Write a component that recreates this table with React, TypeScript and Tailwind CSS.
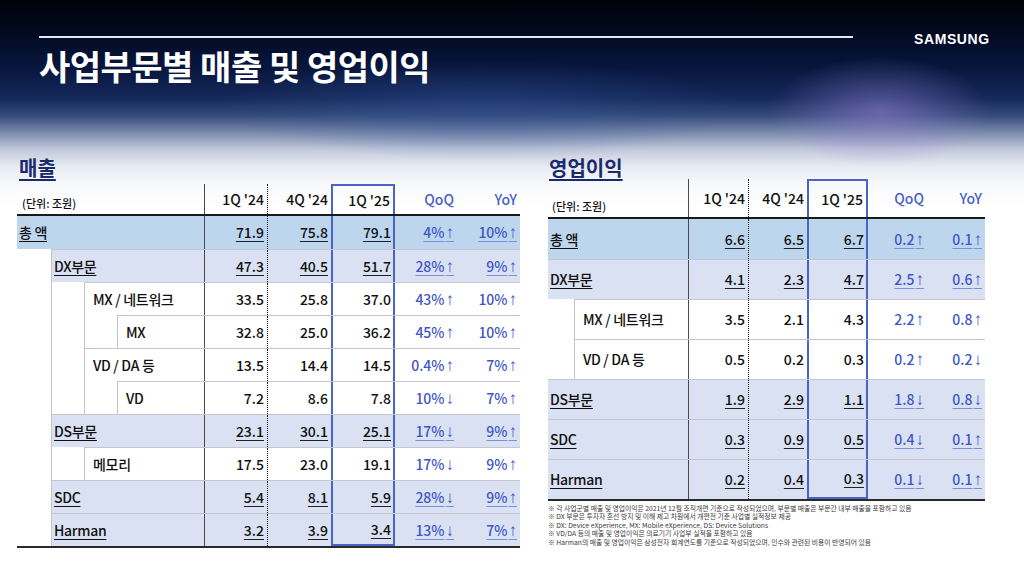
import React from "react";

type Kind = "total" | "seg" | "sub";
type Row = {
  label: string;
  level: number;
  kind: Kind;
  v: [string, string, string];
  q: string;
  y: string;
};

const leftRows: Row[] = [
  { label: "총 액", level: 0, kind: "total", v: ["71.9", "75.8", "79.1"], q: "4%↑", y: "10%↑" },
  { label: "DX부문", level: 1, kind: "seg", v: ["47.3", "40.5", "51.7"], q: "28%↑", y: "9%↑" },
  { label: "MX / 네트워크", level: 2, kind: "sub", v: ["33.5", "25.8", "37.0"], q: "43%↑", y: "10%↑" },
  { label: "MX", level: 3, kind: "sub", v: ["32.8", "25.0", "36.2"], q: "45%↑", y: "10%↑" },
  { label: "VD / DA 등", level: 2, kind: "sub", v: ["13.5", "14.4", "14.5"], q: "0.4%↑", y: "7%↑" },
  { label: "VD", level: 3, kind: "sub", v: ["7.2", "8.6", "7.8"], q: "10%↓", y: "7%↑" },
  { label: "DS부문", level: 1, kind: "seg", v: ["23.1", "30.1", "25.1"], q: "17%↓", y: "9%↑" },
  { label: "메모리", level: 2, kind: "sub", v: ["17.5", "23.0", "19.1"], q: "17%↓", y: "9%↑" },
  { label: "SDC", level: 1, kind: "seg", v: ["5.4", "8.1", "5.9"], q: "28%↓", y: "9%↑" },
  { label: "Harman", level: 1, kind: "seg", v: ["3.2", "3.9", "3.4"], q: "13%↓", y: "7%↑" },
];

const rightRows: Row[] = [
  { label: "총 액", level: 0, kind: "total", v: ["6.6", "6.5", "6.7"], q: "0.2↑", y: "0.1↑" },
  { label: "DX부문", level: 0, kind: "seg", v: ["4.1", "2.3", "4.7"], q: "2.5↑", y: "0.6↑" },
  { label: "MX / 네트워크", level: 1, kind: "sub", v: ["3.5", "2.1", "4.3"], q: "2.2↑", y: "0.8↑" },
  { label: "VD / DA 등", level: 1, kind: "sub", v: ["0.5", "0.2", "0.3"], q: "0.2↑", y: "0.2↓" },
  { label: "DS부문", level: 0, kind: "seg", v: ["1.9", "2.9", "1.1"], q: "1.8↓", y: "0.8↓" },
  { label: "SDC", level: 0, kind: "seg", v: ["0.3", "0.9", "0.5"], q: "0.4↓", y: "0.1↑" },
  { label: "Harman", level: 0, kind: "seg", v: ["0.2", "0.4", "0.3"], q: "0.1↓", y: "0.1↑" },
];

type Cfg = {
  spacers: string[];
  cols: string[];
  rowH: string;
  headerH: string;
  leftLine: boolean;
};

const leftCfg: Cfg = {
  spacers: ["w-[34px]", "w-[33px] border-l border-[#c4c4c4]", "w-[33px] border-l border-[#c4c4c4]"],
  cols: ["w-[63px]", "w-[64px]", "w-[64px]", "w-[62px]", "w-[63px]"],
  rowH: "h-[33px]",
  headerH: "h-[32px]",
  leftLine: true,
};

const rightCfg: Cfg = {
  spacers: ["w-[26px]"],
  cols: ["w-[60px]", "w-[59px]", "w-[61px]", "w-[59px]", "w-[58px]"],
  rowH: "h-[40px]",
  headerH: "h-[40px]",
  leftLine: false,
};

const colBorder = [
  "border-l border-[#4a4a4a]",
  "border-l border-dotted border-[#111]",
  "border-x-2 border-[#4a63c7]",
  "",
  "",
];

function Val({ text, blue, under }: { text: string; blue?: boolean; under: boolean }) {
  const last = text.slice(-1);
  const hasArrow = last === "↑" || last === "↓";
  const num = hasArrow ? text.slice(0, -1) : text;
  return (
    <span
      className={
        (blue ? "text-[#3f56c4] decoration-[#7d8fd8] " : "text-[#111] decoration-[#222] ") +
        (under ? "underline underline-offset-[3px] decoration-[1px]" : "")
      }
    >
      {num}
      {hasArrow && (
        <span className="font-['Liberation_Sans',sans-serif] font-bold text-[17px] leading-none ml-[1px]">{last}</span>
      )}
    </span>
  );
}

function Table({ rows, cfg, headerPad }: { rows: Row[]; cfg: Cfg; headerPad: string }) {
  const heads = ["1Q '24", "4Q '24", "1Q '25", "QoQ", "YoY"];
  return (
    <div className="border-b-2 border-[#2a2a2a]">
      <div className={"flex border-b-2 border-[#1a1a1a] " + cfg.headerH}>
        <div className={"flex-1 flex items-end text-[11px] font-medium text-[#111] " + headerPad}>(단위: 조원)</div>
        {heads.map((h, i) => (
          <div
            key={h}
            className={
              "flex items-center justify-end pr-[3px] text-[14px] font-medium " +
              cfg.cols[i] +
              " " +
              colBorder[i] +
              (i === 2 ? " border-t-2 pr-[2px]" : "") +
              (i >= 3 ? " text-[#4a5fc6]" : " text-[#111]")
            }
          >
            {h}
          </div>
        ))}
      </div>
      {rows.map((r, ri) => {
        const under = r.kind !== "sub";
        const bg = r.kind === "total" ? "bg-[#bdd6ee]" : r.kind === "seg" ? "bg-[#d9e1f3]" : "bg-white";
        const isLast = ri === rows.length - 1;
        return (
          <div key={ri} className={"flex " + cfg.rowH}>
            {cfg.spacers.slice(0, r.level).map((s, si) => (
              <div key={si} className={"shrink-0 " + s}></div>
            ))}
            <div
              className={
                "flex flex-1 " +
                bg +
                (ri > 0 ? " border-t border-[#c4c7cf]" : "") +
                (r.level > 0 || (cfg.leftLine && ri > 0) ? " border-l border-l-[#c4c4c4]" : "")
              }
            >
              <div
                className={
                  "flex-1 flex items-center text-[14px] font-medium text-[#111] tracking-[-0.3px] " +
                  (r.kind === "sub" ? "pl-[8px]" : "pl-[2px]")
                }
              >
                <span className={under ? "underline underline-offset-[3px] decoration-[1px]" : ""}>{r.label}</span>
              </div>
              {[r.v[0], r.v[1], r.v[2], r.q, r.y].map((val, ci) => (
                <div
                  key={ci}
                  className={
                    "flex items-center justify-end text-[14px] font-medium " +
                    cfg.cols[ci] +
                    " " +
                    colBorder[ci] +
                    (ci === 2 ? " pr-[2px]" : " pr-[3px]") +
                    (ci === 2 && isLast ? " border-b-2" : "")
                  }
                >
                  <Val text={val} blue={ci >= 3} under={under} />
                </div>
              ))}
            </div>
          </div>
        );
      })}
    </div>
  );
}

export default function App() {
  return (
    <div className="w-[1024px] h-[576px] overflow-hidden font-['Noto_Sans_CJK_KR','Noto_Sans',sans-serif] bg-[radial-gradient(ellipse_110px_55px_at_880px_112px,rgba(150,130,210,0.55),transparent),radial-gradient(ellipse_260px_50px_at_480px_110px,rgba(50,85,150,0.45),transparent),linear-gradient(180deg,#000207_0%,#020a22_6%,#08173f_12%,#15285a_17%,#34497a_20%,#8795b4_23.5%,#c3cadc_26%,#e8ebf2_29%,#f8f9fb_32%,#ffffff_36%)]">
      <div className="pt-[35px] pl-[39px] flex items-start">
        <div className="mt-[1px] h-[2px] w-[814px] bg-white/90"></div>
        <div className="ml-[61px] -mt-[3px] text-white text-[14px] font-bold tracking-[0.6px] leading-none font-['Liberation_Sans',sans-serif]">
          SAMSUNG
        </div>
      </div>
      <div className="mt-[3px] ml-[39px] text-white text-[34px] font-bold leading-none tracking-[-0.5px]">
        사업부문별 매출 및 영업이익
      </div>
      <div className="flex items-start mt-[74px]">
        <div className="ml-[17px] w-[503px]">
          <div className="pl-[2px] h-[27px] text-[20px] font-bold leading-[22px] text-[#1b2a6b] underline underline-offset-[3px] decoration-[1.5px]">
            매출
          </div>
          <Table rows={leftRows} cfg={leftCfg} headerPad="pl-[5px] pb-[3px]" />
        </div>
        <div className="ml-[28px] w-[437px]">
          <div className="pl-[1px] h-[22px] text-[20px] font-bold leading-[22px] text-[#1b2a6b] underline underline-offset-[3px] decoration-[1.5px]">
            영업이익
          </div>
          <Table rows={rightRows} cfg={rightCfg} headerPad="pl-[4px] pb-[3px]" />
          <div className="mt-[3px] text-[6.8px] leading-[8.4px] text-[#3a3a3a] whitespace-nowrap">
            <div>※ 각 사업군별 매출 및 영업이익은 2021년 12월 조직개편 기준으로 작성되었으며, 부문별 매출은 부문간 내부 매출을 포함하고 있음</div>
            <div>※ DX 부문은 투자자 혼선 방지 및 이해 제고 차원에서 개편전 기준 사업별 실적정보 제공</div>
            <div>※ DX: Device eXperience, MX: Mobile eXperience, DS: Device Solutions</div>
            <div>※ VD/DA 등의 매출 및 영업이익은 의료기기 사업부 실적을 포함하고 있음</div>
            <div>※ Harman의 매출 및 영업이익은 삼성전자 회계연도를 기준으로 작성되었으며, 인수와 관련된 비용이 반영되어 있음</div>
          </div>
        </div>
      </div>
    </div>
  );
}
